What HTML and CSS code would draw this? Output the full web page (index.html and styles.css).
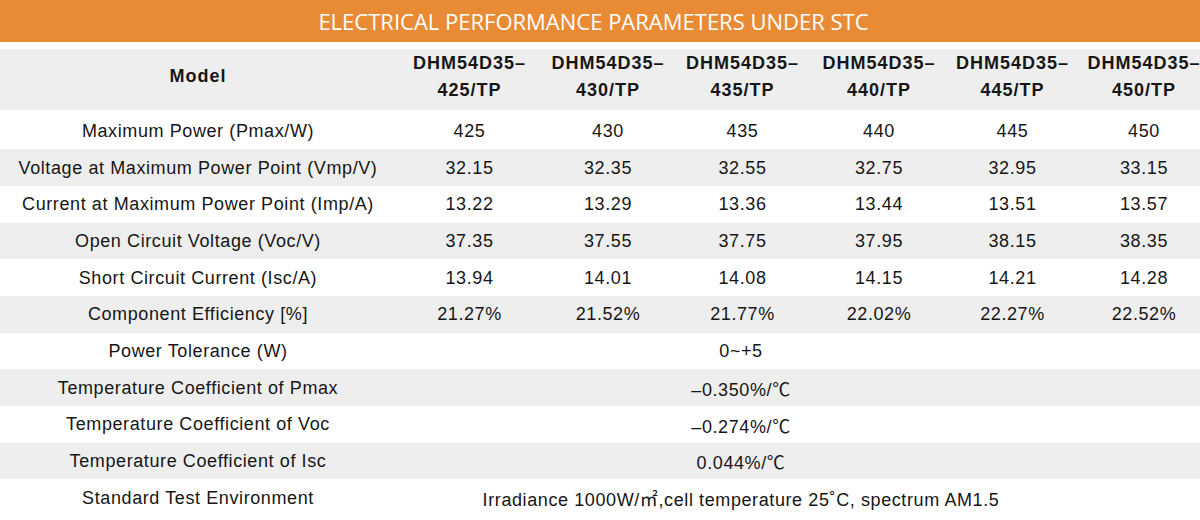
FILE: index.html
```html
<!DOCTYPE html>
<html lang="en">
<head>
<meta charset="utf-8">
<title>Electrical Performance Parameters under STC</title>
<link rel="stylesheet" href="styles.css">
</head>
<body>
<div class="page">
  <div class="title">ELECTRICAL PERFORMANCE PARAMETERS UNDER STC</div>
  <div class="table">
    <div class="row head">
      <div class="cell label">Model</div>
      <div class="cell">DHM54D35–<br>425/TP</div>
      <div class="cell">DHM54D35–<br>430/TP</div>
      <div class="cell">DHM54D35–<br>435/TP</div>
      <div class="cell">DHM54D35–<br>440/TP</div>
      <div class="cell">DHM54D35–<br>445/TP</div>
      <div class="cell">DHM54D35–<br>450/TP</div>
    </div>
    <div class="row">
      <div class="cell label">Maximum Power (Pmax/W)</div>
      <div class="cell">425</div><div class="cell">430</div><div class="cell">435</div><div class="cell">440</div><div class="cell">445</div><div class="cell">450</div>
    </div>
    <div class="row alt">
      <div class="cell label">Voltage at Maximum Power Point (Vmp/V)</div>
      <div class="cell">32.15</div><div class="cell">32.35</div><div class="cell">32.55</div><div class="cell">32.75</div><div class="cell">32.95</div><div class="cell">33.15</div>
    </div>
    <div class="row">
      <div class="cell label">Current at Maximum Power Point (Imp/A)</div>
      <div class="cell">13.22</div><div class="cell">13.29</div><div class="cell">13.36</div><div class="cell">13.44</div><div class="cell">13.51</div><div class="cell">13.57</div>
    </div>
    <div class="row alt">
      <div class="cell label">Open Circuit Voltage (Voc/V)</div>
      <div class="cell">37.35</div><div class="cell">37.55</div><div class="cell">37.75</div><div class="cell">37.95</div><div class="cell">38.15</div><div class="cell">38.35</div>
    </div>
    <div class="row">
      <div class="cell label">Short Circuit Current (Isc/A)</div>
      <div class="cell">13.94</div><div class="cell">14.01</div><div class="cell">14.08</div><div class="cell">14.15</div><div class="cell">14.21</div><div class="cell">14.28</div>
    </div>
    <div class="row alt">
      <div class="cell label">Component Efficiency [%]</div>
      <div class="cell">21.27%</div><div class="cell">21.52%</div><div class="cell">21.77%</div><div class="cell">22.02%</div><div class="cell">22.27%</div><div class="cell">22.52%</div>
    </div>
    <div class="row">
      <div class="cell label">Power Tolerance (W)</div>
      <div class="cell span">0~+5</div>
    </div>
    <div class="row alt">
      <div class="cell label">Temperature Coefficient of Pmax</div>
      <div class="cell span">–0.350%/℃</div>
    </div>
    <div class="row">
      <div class="cell label">Temperature Coefficient of Voc</div>
      <div class="cell span">–0.274%/℃</div>
    </div>
    <div class="row alt">
      <div class="cell label">Temperature Coefficient of Isc</div>
      <div class="cell span">0.044%/℃</div>
    </div>
    <div class="row">
      <div class="cell label">Standard Test Environment</div>
      <div class="cell span">Irradiance 1000W/㎡,cell temperature 25˚C, spectrum AM1.5</div>
    </div>
  </div>
</div>
</body>
</html>
```
FILE: styles.css
```css
html, body {
  margin: 0;
  padding: 0;
  background: #ffffff;
  overflow: hidden;
}

.page {
  width: 1200px;
  height: 520px;
  overflow: hidden;
  font-family: "Liberation Sans", Arial, "Noto Sans CJK SC", sans-serif;
  color: #161616;
}

.title {
  height: 42px;
  line-height: 43px;
  background: #e98b35;
  color: #ffffff;
  font-family: "Open Sans", "Liberation Sans", sans-serif;
  font-size: 22px;
  font-weight: 400;
  text-align: center;
  padding-right: 13px;
  margin-bottom: 7px;
  white-space: nowrap;
}

.table {
  width: 1209px;
}

.row {
  display: grid;
  grid-template-columns: 396px 147px 130px 139px 134px 133px 130px;
  height: 36.67px;
  align-items: center;
  font-size: 18px;
  letter-spacing: 0.6px;
}

.row.alt {
  background: #eeeeee;
}

.row.head {
  height: 61px;
  margin-bottom: 2.67px;
  background: #eeeeee;
  font-weight: 700;
  line-height: 26.6px;
  letter-spacing: 1px;
}

.cell {
  text-align: center;
  white-space: nowrap;
}

.row.head .cell {
  padding-bottom: 8px;
}

.row .cell {
  padding-top: 1px;
}

.cell.span {
  grid-column: 2 / span 5;
  padding-left: 7px;
}
```
